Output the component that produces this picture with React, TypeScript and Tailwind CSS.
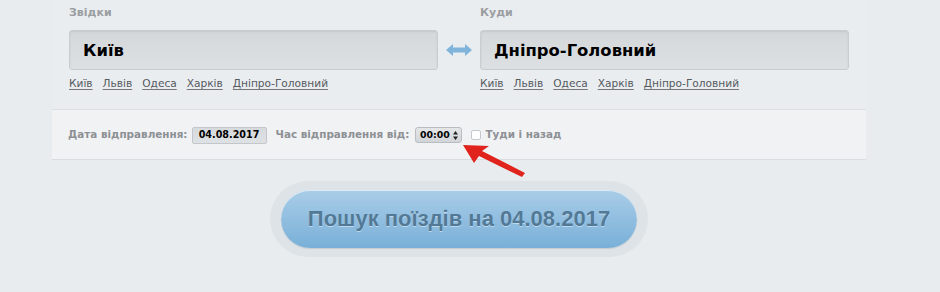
import React from "react";

const links = ["Київ", "Львів", "Одеса", "Харків", "Дніпро-Головний"];

function Column({ label, value }: { label: string; value: string }) {
  return (
    <div className="flex flex-col w-[369px]">
      <div className="mt-[5px] h-[16px] leading-[16px] text-[11px] font-bold text-[#9a9da1]">{label}</div>
      <div className="mt-[9px] h-[40px] rounded-[3px] border border-[#c9cdd1] bg-gradient-to-b from-[#d5d8db] to-[#dde0e3] shadow-[inset_0_1px_2px_rgba(0,0,0,0.08)] flex items-center pl-[13px] pt-[2px] text-[16.4px] font-bold text-black">
        {value}
      </div>
      <div className="mt-[6px] flex gap-[10px] text-[10.6px] leading-[14px] text-[#555a5f]">
        {links.map((l) => (
          <span key={l} className="underline underline-offset-[2px] decoration-[#777]">{l}</span>
        ))}
      </div>
    </div>
  );
}

export default function App() {
  return (
    <div className="w-[940px] h-[292px] bg-[#e9ecef] overflow-hidden relative" style={{ fontFamily: '"DejaVu Sans", Verdana, sans-serif' }}>
      <div className="ml-[52px] w-[814px]">
        <div className="h-[110px] bg-[#eaedf0] border-b border-[#dcdfe3] pl-[17px] flex">
          <Column label="Звідки" value="Київ" />
          <div className="w-[42px] flex items-start justify-center pt-[43px]">
            <svg width="26" height="14" viewBox="0 0 26 14">
              <path d="M0 7 L7 1 L7 4.5 L19 4.5 L19 1 L26 7 L19 13 L19 9.5 L7 9.5 L7 13 Z" fill="#80b4db" />
            </svg>
          </div>
          <Column label="Куди" value="Дніпро-Головний" />
        </div>
        <div className="h-[50px] bg-[#f1f2f4] border-b border-[#d9dde1] pl-[16px] pt-[1px] flex items-center text-[10.4px] font-bold text-[#8d9094]">
          <span>Дата відправлення:</span>
          <span className="ml-[4px] w-[75px] h-[17px] rounded-[2px] border border-[#c3c7cb] bg-gradient-to-b from-[#d7dadd] to-[#dfe2e5] flex items-center justify-center text-[9.6px] text-black">04.08.2017</span>
          <span className="ml-[9px]">Час відправлення від:</span>
          <span className="ml-[6px] w-[47px] h-[16px] rounded-[3px] border border-[#b9bdc1] bg-gradient-to-b from-[#e4e6e8] to-[#d2d5d8] flex items-center justify-center gap-[3px] text-[9.4px] text-black">
            00:00
            <svg width="5" height="9" viewBox="0 0 5 9">
              <path d="M0 3.5 L2.5 0 L5 3.5 Z M0 5.5 L2.5 9 L5 5.5 Z" fill="#222" />
            </svg>
          </span>
          <span className="ml-[9px] w-[10px] h-[10px] rounded-[2px] border border-[#c5c8cc] bg-white"></span>
          <span className="ml-[4px]">Туди і назад</span>
        </div>
        <div className="flex justify-center mt-[21px]">
          <div className="rounded-full bg-[#dde3e7] px-[11px] py-[9px]">
            <div className="w-[356px] h-[58px] rounded-full bg-gradient-to-b from-[#a9cde8] to-[#79b0d8] shadow-[inset_0_1px_0_rgba(255,255,255,0.6),0_1px_1px_rgba(0,0,0,0.1)] flex items-center justify-center pb-[2px] text-[22px] font-bold text-[#527a97] [text-shadow:0_1px_0_rgba(255,255,255,0.45)]" style={{ fontFamily: '"Liberation Sans", Arial, sans-serif' }}>
              Пошук поїздів на 04.08.2017
            </div>
          </div>
        </div>
      </div>
      <svg className="absolute left-0 top-0" width="940" height="292" viewBox="0 0 940 292" style={{ pointerEvents: "none" }}>
        <path d="M463 145 L489 146 L482 151 L525 173 L522 177 L479 156 L474 163 Z" fill="#e0231c" />
      </svg>
    </div>
  );
}
